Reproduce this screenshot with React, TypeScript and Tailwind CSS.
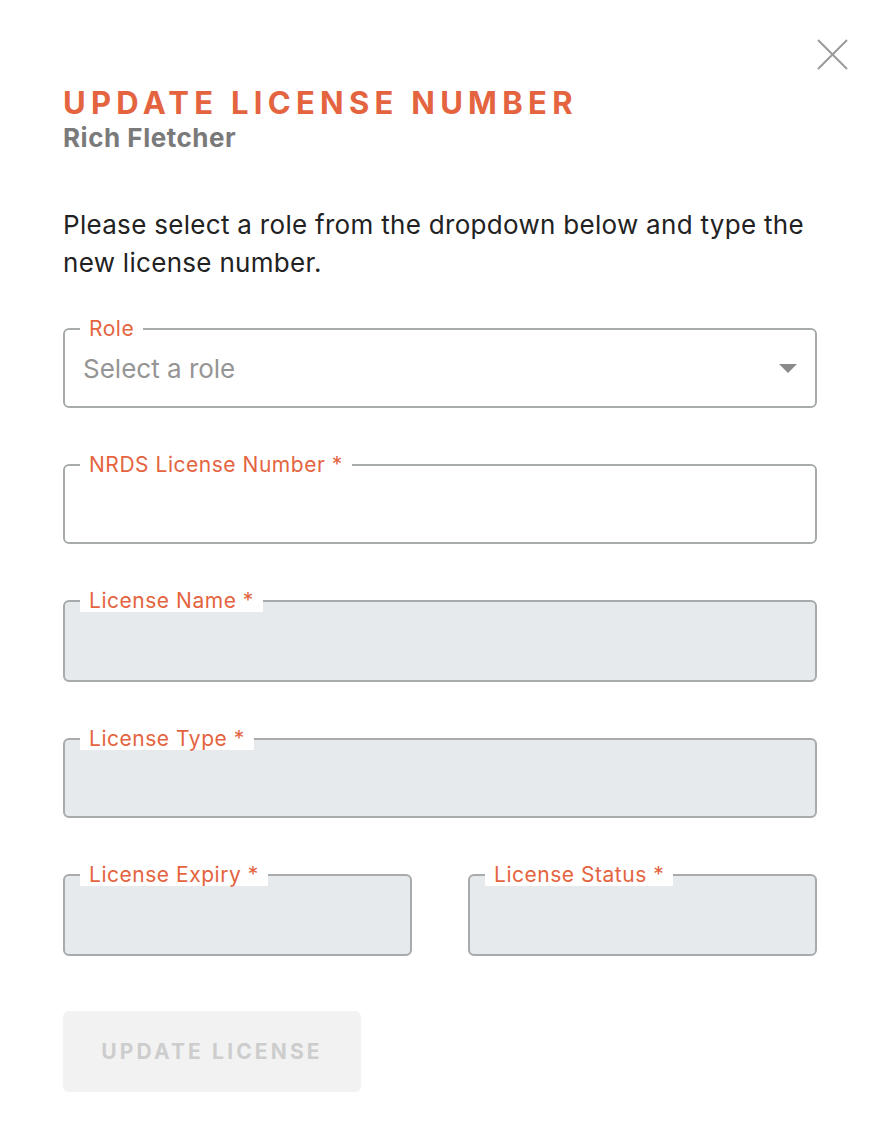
import React from "react";

const font = { fontFamily: "Inter, 'Noto Sans', sans-serif" };

type FieldProps = {
    label: string;
    disabled?: boolean;
    tall?: boolean;
    children?: React.ReactNode;
};

const Field = ({ label, disabled, tall, children }: FieldProps) => {
    return (
        <div className="relative pt-[11px]">
            <span className="absolute left-[17px] top-0 z-10 bg-white px-[9px] text-[21px] leading-[23px] tracking-[0.025em] text-[#e4643f]">
                {label}
            </span>
            <div
                className={
                    (tall ? "h-[82px] " : "h-[80px] ") +
                    (disabled
                        ? "flex items-center rounded-[6px] border-2 border-[#a7abab] bg-[#e7eaed] px-[18px]"
                        : "flex items-center rounded-[6px] border-2 border-[#a7abab] bg-white px-[18px]")
                }
            >
                {children}
            </div>
        </div>
    );
};

export default function App() {
    return (
        <div className="min-h-[1122px] w-[884px] bg-white" style={font}>
            <div className="relative pl-[63px] pr-[67px] pt-[84px]">
                <button className="absolute right-[36px] top-[39px] text-[#9a9b98]">
                    <svg width="31" height="31" viewBox="0 0 31 31" fill="none" stroke="currentColor" strokeWidth="2">
                        <path d="M1 1L30 30M30 1L1 30" />
                    </svg>
                </button>
                <h1 className="text-[31px] font-bold leading-[38px] tracking-[0.17em] text-[#e4643f]">
                    UPDATE LICENSE NUMBER
                </h1>
                <h2 className="text-[26px] font-bold leading-[32px] tracking-[0.02em] text-[#7a7a7a]">Rich Fletcher</h2>
                <p className="mt-[52px] text-[26px] leading-[38px] tracking-[0.3px] text-[#222]">
                    Please select a role from the dropdown below and type the new license number.
                </p>
                <div className="mt-[35px] flex flex-col gap-[45px]">
                    <Field label="Role">
                        <span className="flex-1 text-[26px] text-[#959595]">Select a role</span>
                        <svg width="18" height="9" viewBox="0 0 18 9">
                            <path d="M0 0H18L9 9Z" fill="#8a8a8a" />
                        </svg>
                    </Field>
                    <Field label="NRDS License Number *" />
                    <Field label="License Name *" disabled tall />
                    <Field label="License Type *" disabled />
                    <div className="grid grid-cols-2 gap-[56px]">
                        <Field label="License Expiry *" disabled tall />
                        <Field label="License Status *" disabled tall />
                    </div>
                </div>
                <button className="mt-[55px] h-[81px] w-[298px] rounded-[6px] bg-[#f2f2f2] text-[21px] font-bold tracking-[0.15em] text-[#cdcdcd]">
                    UPDATE LICENSE
                </button>
            </div>
        </div>
    );
}
